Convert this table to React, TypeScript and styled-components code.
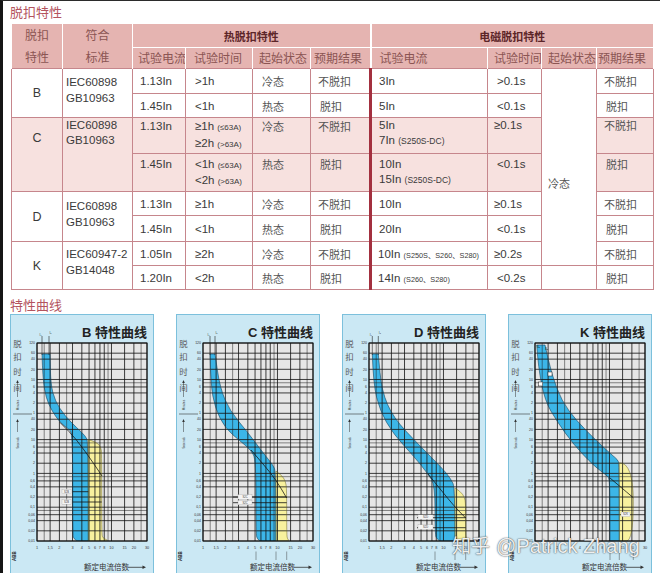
import React from 'react';
import styled, { createGlobalStyle } from 'styled-components';

const GlobalStyle = createGlobalStyle`
  html, body { margin: 0; padding: 0; background: #fff; overflow: hidden; }
  body { font-family: "Liberation Sans", "Noto Sans CJK SC", sans-serif; }
`;

const Frame = styled.div`
  position: relative;
  width: 660px;
  height: 573px;
  box-sizing: border-box;
  border-left: 3px solid #151515;
  border-top: 1px solid #2b2b2b;
  background: #fff;
  overflow: hidden;
`;

const SectionTitle = styled.div<{ $h: number; $pt?: number }>`
  height: ${p => p.$h}px;
  box-sizing: border-box;
  padding: ${p => p.$pt ?? 0}px 0 0 7px;
  line-height: ${p => p.$h - (p.$pt ?? 0)}px;
  font-family: "Noto Sans CJK SC", sans-serif;
  font-size: 13px;
  color: #b3535e;
`;

const Table = styled.table`
  margin-left: 8px;
  width: 642px;
  border-collapse: collapse;
  table-layout: fixed;
  border: 1.5px solid #b56a72;
`;

const Col = styled.col<{ $w: number }>`
  width: ${p => p.$w}px;
`;

const Tr = styled.tr<{ $h: number; $pink?: boolean }>`
  height: ${p => p.$h}px;
  background: ${p => (p.$pink ? '#f7e1df' : '#ffffff')};
`;

const Th = styled.th<{ $pl?: number; $center?: boolean; $sep?: boolean; $bold?: boolean; $lh?: number }>`
  background: #e5b4b1;
  border: 1px solid #ffffff;
  border-bottom: none;
  ${p => (p.$sep ? 'border-left: 2px solid #ffffff;' : '')}
  padding: 0 0 0 ${p => p.$pl ?? 0}px;
  text-align: ${p => (p.$center ? 'center' : 'left')};
  vertical-align: middle;
  font-family: "Noto Sans CJK SC", sans-serif;
  font-size: ${p => (p.$bold ? 11 : 12)}px;
  font-weight: ${p => (p.$bold ? 700 : 400)};
  color: ${p => (p.$bold ? '#5c2528' : '#8b5553')};
  line-height: ${p => p.$lh ?? 20}px;
  white-space: nowrap;
  overflow: hidden;
`;

const Td = styled.td<{
  $pl?: number;
  $pt?: number;
  $lh?: number;
  $top?: boolean;
  $center?: boolean;
  $sep?: boolean;
  $cjk?: boolean;
  $bg?: string;
}>`
  border: 1px solid #c6868c;
  ${p => (p.$sep ? 'border-left: 3px solid #a3303f;' : '')}
  padding: ${p => p.$pt ?? 0}px 0 0 ${p => p.$pl ?? 7}px;
  vertical-align: ${p => (p.$top ? 'top' : 'middle')};
  text-align: ${p => (p.$center ? 'center' : 'left')};
  font-family: ${p => (p.$cjk ? '"Noto Sans CJK SC", sans-serif' : '"Liberation Sans", "Noto Sans CJK SC", sans-serif')};
  font-size: ${p => (p.$cjk ? 11 : 11.5)}px;
  line-height: ${p => p.$lh ?? 16}px;
  color: ${p => (p.$cjk ? '#555555' : '#3a3a3a')};
  ${p => (p.$bg ? `background: ${p.$bg};` : '')}
  white-space: nowrap;
  overflow: hidden;
`;

const Line = styled.div``;

const Small = styled.span<{ $size?: number }>`
  font-size: ${p => p.$size ?? 8}px;
  line-height: 1;
`;

const Letter = styled.span`
  font-size: 12.5px;
`;

const ChartRow = styled.div`
  display: flex;
  gap: 22px;
  padding-left: 7px;
`;

const Panel = styled.div`
  width: 144px;
  height: 262px;
  flex-shrink: 0;
  box-sizing: border-box;
  border: 1px solid #7cc0dc;
  background: #cbe8f4;
  display: flex;
  flex-direction: column;
`;

const ChartTitle = styled.div`
  height: 28px;
  box-sizing: border-box;
  padding: 11px 6px 0 0;
  text-align: right;
  font-family: "Liberation Sans", "Noto Sans CJK SC", sans-serif;
  font-weight: 700;
  font-size: 13px;
  line-height: 14px;
  color: #222;
  white-space: nowrap;
`;

const ChartSvg = styled.svg`
  display: block;
  overflow: visible;
  font-family: "Liberation Sans", "Noto Sans CJK SC", sans-serif;
`;

const Watermark = styled.div`
  position: absolute;
  left: 449px;
  top: 533px;
  font-family: "Liberation Sans", "Noto Sans CJK SC", sans-serif;
  font-size: 20px;
  line-height: 22px;
  color: rgba(255, 255, 255, 0.93);
  text-shadow: 0 0 1px rgba(60, 60, 60, 0.9), 0 0 2px rgba(0, 0, 0, 0.45);
  white-space: nowrap;
  pointer-events: none;
`;

const Zh = styled.span`
  font-family: "Noto Sans CJK SC", sans-serif;
  font-size: 19px;
  margin-right: 6px;
`;

/* ---------- chart drawing ---------- */

type P = [number, number];

const GX0 = 27;
const GX1 = 137;
const GY0 = 29;
const GY1 = 227;
const GW = GX1 - GX0;
const GH = GY1 - GY0;
const X = (m: number) => GX0 + (Math.log10(m) / Math.log10(30)) * GW;
const Y = (t: number) =>
  GY0 + ((Math.log10(7200) - Math.log10(t)) / (Math.log10(7200) - Math.log10(0.01))) * GH;

const VMAIN = [1, 1.5, 2, 3, 4, 5, 6, 7, 8, 10, 15, 20, 30];
const VEXTRA = [1.25, 2.5, 9, 25];
const HMAIN = [7200, 3600, 2400, 1200, 600, 360, 240, 120, 60, 40, 20, 10, 6, 4, 2, 1, 0.6, 0.4, 0.2, 0.1, 0.06, 0.04, 0.02, 0.01];
const HEXTRA = [480, 8, 0.8, 0.08];

const YLABELS: [number, string][] = [
  [7200, '120'], [3600, '60'], [2400, '40'], [1200, '20'], [600, '10'], [360, '6'], [240, '4'],
  [120, '2'], [60, '1'], [40, '40'], [20, '20'], [10, '10'], [6, '6'], [4, '4'], [2, '2'], [1, '1'],
  [0.6, '0,6'], [0.4, '0,4'], [0.2, '0,2'], [0.1, '0,1'], [0.06, '0,06'], [0.04, '0,04'],
  [0.02, '0,02'], [0.01, '0,01'],
];
const XLABELS: [number, string][] = [
  [1, '1'], [1.5, '1,5'], [2, '2'], [3, '3'], [4, '4'], [5, '5'], [6, '6'], [7, '7'], [8, '8'],
  [10, '10'], [15, '15'], [20, '20'], [30, '30'],
];

const smooth = (pts: P[], cmd: 'M' | 'L' = 'M') => {
  let d = `${cmd}${pts[0][0]} ${pts[0][1]}`;
  for (let i = 1; i < pts.length - 1; i++) {
    const [x, y] = pts[i];
    const [nx, ny] = pts[i + 1];
    d += ` Q${x} ${y} ${(x + nx) / 2} ${(y + ny) / 2}`;
  }
  const l = pts[pts.length - 1];
  d += ` L${l[0]} ${l[1]}`;
  return d;
};
const band = (left: P[], right: P[]) => `${smooth(left)} ${smooth([...right].reverse(), 'L')} Z`;

interface ChartSpec {
  letter: string;
  left: P[];
  right: P[];
  yellow: P[];
  diag: P[];
  ticks: { y: number; x1: number; x2: number }[];
  tags: { x: number; y: number; w: number }[];
  iLines?: [number, number];
  marks: number[];
  squares?: P[];
}

const CHARTS: ChartSpec[] = [
  {
    letter: 'B',
    left: [[32, 40], [32.7, 64], [36, 84], [42, 97], [50, 108.5], [58, 114.5], [62.7, 119], [62.7, 221], [64, 225], [67.5, 227]],
    right: [[40, 40], [40.7, 70], [45, 87], [55, 102], [67, 114], [75.5, 122], [78.3, 128], [78.3, 227]],
    yellow: [[78.3, 125.5], [86.5, 128], [91, 133], [91.7, 140], [91.7, 220], [93, 224.5], [100, 227], [78.3, 227]],
    diag: [[50, 108.5], [60, 118], [72, 133], [84, 150], [92, 162]],
    ticks: [{ y: 177.7, x1: 62.7, x2: 78.3 }, { y: 188, x1: 62.7, x2: 91.7 }],
    tags: [{ x: 52, y: 175.2, w: 9 }, { x: 52, y: 185.5, w: 9 }],
    iLines: [32, 39],
    marks: [],
  },
  {
    letter: 'C',
    left: [[34, 40], [34.7, 70], [39, 94], [49, 114], [64, 127], [75, 136], [80, 146], [80, 221], [81.5, 225], [84, 227]],
    right: [[39, 40], [44, 74], [54, 97], [70.7, 117], [88, 140], [97, 151], [100, 158], [100, 227]],
    yellow: [[100, 157], [105.5, 161], [109.5, 167], [110.7, 175], [110.7, 221], [111.5, 225], [113.5, 227], [100, 227]],
    diag: [[75, 136], [88, 151], [100, 166], [110.7, 184]],
    ticks: [{ y: 183, x1: 57, x2: 110.7 }, { y: 188.7, x1: 57, x2: 110.7 }],
    tags: [{ x: 62, y: 180.6, w: 14 }, { x: 62, y: 186.3, w: 14 }],
    iLines: [34, 39],
    marks: [80, 100, 110.7],
  },
  {
    letter: 'D',
    left: [[30.3, 40], [31.3, 70], [38, 97], [51.3, 120], [73, 143.7], [86, 160], [93, 171], [93, 221], [95, 225], [98, 227]],
    right: [[36.3, 40], [39.7, 77], [51.3, 103.7], [76.3, 130.3], [100, 154], [109, 165], [113, 174], [113, 227]],
    yellow: [[113, 174], [118.5, 177.5], [122.5, 183], [123.7, 190], [123.7, 221], [124.5, 225], [126, 227], [113, 227]],
    diag: [[86, 160], [99, 176], [112, 192], [123.7, 204]],
    ticks: [{ y: 203.7, x1: 75, x2: 123.7 }, { y: 213.7, x1: 75, x2: 123.7 }],
    tags: [{ x: 76, y: 200.8, w: 15 }, { x: 76, y: 210.8, w: 15 }],
    iLines: [30.3, 36.3],
    marks: [93, 113, 123.7],
  },
  {
    letter: 'K',
    left: [[28.7, 31], [30.3, 54], [37, 87], [48.7, 107], [65.3, 130.3], [86, 152], [99, 161.5], [102, 166], [102, 227]],
    right: [[37, 31], [43.7, 60.3], [53.7, 87], [68.7, 107], [88.7, 127], [104, 141], [109.5, 145.5], [111.3, 150], [111.3, 227]],
    yellow: [[111.3, 148.7], [125.3, 148.7], [125.3, 227], [111.3, 227]],
    diag: [[102, 164], [112, 172.5], [125.3, 183.7]],
    ticks: [],
    tags: [{ x: 113, y: 198, w: 9 }],
    marks: [102, 111.3, 125.3],
    squares: [[42, 60], [32.7, 70]],
  },
];

const ArrowUp: React.FC<{ x: number; top: number; bottom: number }> = ({ x, top, bottom }) => (
  <g>
    <line x1={x} x2={x} y1={bottom} y2={top + 2.5} stroke="#333" strokeWidth={0.5} />
    <polygon points={`${x - 1.3},${top + 3} ${x + 1.3},${top + 3} ${x},${top}`} fill="#333" />
  </g>
);

const Chart: React.FC<{ spec: ChartSpec }> = ({ spec }) => {
  const cid = `grid-clip-${spec.letter}`;
  const bandD = band(spec.left, spec.right);
  const yellowD = `${smooth(spec.yellow)} Z`;
  return (
    <Panel>
      <ChartTitle>{spec.letter} 特性曲线</ChartTitle>
      <ChartSvg width={142} height={232} viewBox="1 29 142 232">
        <defs>
          <clipPath id={cid}>
            <rect x={GX0} y={GY0} width={GW} height={GH} />
          </clipPath>
        </defs>

        {['脱', '扣', '时', '间'].map((c, i) => (
          <text key={c} x={7.5} y={[32.5, 46, 61, 77][i]} fontSize={8.5} fill="#5b5b5b" textAnchor="middle">
            {c}
          </text>
        ))}
        <ArrowUp x={7.5} top={66} bottom={83} />
        <text x={0} y={0} fontSize={3} fill="#444" textAnchor="middle" transform="translate(8.6 91) rotate(-90)">
          Minutes
        </text>
        <line x1={3} x2={22} y1={100} y2={100} stroke="#333" strokeWidth={0.6} />
        <ArrowUp x={7.5} top={105} bottom={118} />
        <text x={0} y={0} fontSize={3} fill="#444" textAnchor="middle" transform="translate(8.6 129) rotate(-90)">
          Seconds
        </text>
        <text x={0} y={0} fontSize={4.5} fontWeight={700} fill="#1f1f1f" textAnchor="middle" transform="translate(6 242) rotate(-90)">
          ABB
        </text>

        <rect x={GX0} y={GY0} width={GW} height={GH} fill="#e6e6e6" />
        <g clipPath={`url(#${cid})`}>
          <path d={yellowD} fill="#f8f19e" />
          <path d={bandD} fill="#3cb6e8" />
        </g>

        {HEXTRA.map(t => (
          <line key={`he${t}`} x1={GX0} x2={GX1} y1={Y(t)} y2={Y(t)} stroke="#1a1a1a" strokeWidth={0.5} />
        ))}
        {HMAIN.map(t => (
          <line key={`h${t}`} x1={GX0} x2={GX1} y1={Y(t)} y2={Y(t)} stroke="#111" strokeWidth={0.8} />
        ))}
        {VEXTRA.map(m => (
          <line key={`ve${m}`} x1={X(m)} x2={X(m)} y1={GY0} y2={GY1} stroke="#1a1a1a" strokeWidth={0.5} />
        ))}
        {VMAIN.map(m => (
          <line key={`v${m}`} x1={X(m)} x2={X(m)} y1={GY0} y2={GY1} stroke="#111" strokeWidth={0.8} />
        ))}

        <g clipPath={`url(#${cid})`}>
          <path d={bandD} fill="none" stroke="#14455f" strokeWidth={0.6} />
          <path d={yellowD} fill="none" stroke="#6b6520" strokeWidth={0.5} />
          <path d={smooth(spec.diag)} fill="none" stroke="#111" strokeWidth={0.75} />
          {spec.ticks.map((t, i) => (
            <line key={`t${i}`} x1={t.x1} x2={t.x2} y1={t.y} y2={t.y} stroke="#111" strokeWidth={0.8} />
          ))}
          {spec.tags.map((t, i) => (
            <g key={`g${i}`}>
              <rect x={t.x} y={t.y} width={t.w} height={4.6} fill="#f3f3f3" stroke="#777" strokeWidth={0.2} />
              <text x={t.x + t.w / 2} y={t.y + 3.4} fontSize={2.6} fill="#333" textAnchor="middle">
                S2{spec.letter}
              </text>
            </g>
          ))}
          {(spec.squares ?? []).map(([sx, sy], i) => (
            <rect key={`s${i}`} x={sx - 2} y={sy - 2} width={4} height={4} fill="#fff" stroke="#222" strokeWidth={0.5} />
          ))}
        </g>
        <rect x={GX0} y={GY0} width={GW} height={GH} fill="none" stroke="#111" strokeWidth={1} />

        {spec.iLines &&
          spec.iLines.map((x, i) => (
            <g key={`i${i}`}>
              <line x1={x} x2={x} y1={22} y2={41} stroke="#222" strokeWidth={0.6} />
              <text x={x + (i === 0 ? -1.5 : 1.5)} y={i === 0 ? 21.5 : 20} fontSize={3} fill="#333" textAnchor="middle">
                {i === 0 ? 'I₁' : 'I₂'}
              </text>
            </g>
          ))}
        {!spec.iLines && (
          <g>
            <text x={29.5} y={34} fontSize={3.5} fontWeight={700} fill="#111">I₁</text>
            <text x={37.5} y={36} fontSize={3.5} fontWeight={700} fill="#111">I₂</text>
          </g>
        )}

        {YLABELS.map(([t, s]) => (
          <text key={`yl${t}`} x={GX0 - 2} y={Y(t) + 1.2} fontSize={3.5} fill="#333" textAnchor="end">
            {s}
          </text>
        ))}
        {XLABELS.map(([m, s]) => (
          <text key={`xl${m}`} x={X(m)} y={235} fontSize={3.8} fill="#333" textAnchor="middle">
            {s}
          </text>
        ))}
        {spec.marks.map(x => (
          <line key={`m${x}`} x1={x} x2={x} y1={237.5} y2={246} stroke="#333" strokeWidth={0.45} />
        ))}

        <text x={74} y={256} fontSize={7.5} fill="#333">
          额定电流倍数
        </text>
        <line x1={118} x2={133} y1={253.3} y2={253.3} stroke="#333" strokeWidth={0.8} />
        <polygon points="132.5,251.5 136,253.3 132.5,255.1" fill="#333" />
      </ChartSvg>
    </Panel>
  );
};

/* ---------- page ---------- */

const COLS = [51, 70, 53, 67, 58, 60, 117, 54, 55, 57];

export default function App() {
  return (
    <>
      <GlobalStyle />
      <Frame>
        <SectionTitle $h={22}>脱扣特性</SectionTitle>
        <Table>
          <colgroup>
            {COLS.map((w, i) => (
              <Col key={i} $w={w} />
            ))}
          </colgroup>
          <thead>
            <Tr $h={24}>
              <Th rowSpan={2} $center $lh={22}>
                脱扣
                <br />
                特性
              </Th>
              <Th rowSpan={2} $center $lh={22}>
                符合
                <br />
                标准
              </Th>
              <Th colSpan={4} $center $bold>
                热脱扣特性
              </Th>
              <Th colSpan={4} $center $bold $sep>
                电磁脱扣特性
              </Th>
            </Tr>
            <Tr $h={21}>
              <Th $pl={5}>试验电流</Th>
              <Th $pl={8}>试验时间</Th>
              <Th $pl={6}>起始状态</Th>
              <Th $pl={3}>预期结果</Th>
              <Th $pl={8} $sep>
                试验电流
              </Th>
              <Th $pl={6}>试验时间</Th>
              <Th $pl={6}>起始状态</Th>
              <Th $pl={1}>预期结果</Th>
            </Tr>
          </thead>
          <tbody>
            {/* B */}
            <Tr $h={25}>
              <Td rowSpan={2} $center $pl={0}>
                <Letter>B</Letter>
              </Td>
              <Td rowSpan={2} $top $pt={5} $pl={3}>
                <Line>IEC60898</Line>
                <Line>GB10963</Line>
              </Td>
              <Td>1.13In</Td>
              <Td $pl={9}>&gt;1h</Td>
              <Td $pl={9} $cjk>冷态</Td>
              <Td $cjk>不脱扣</Td>
              <Td $sep>3In</Td>
              <Td $pl={9}>&gt;0.1s</Td>
              <Td rowSpan={7} $top $pt={106} $pl={6} $cjk $bg="#ffffff">
                冷态
              </Td>
              <Td $cjk>不脱扣</Td>
            </Tr>
            <Tr $h={24}>
              <Td>1.45In</Td>
              <Td $pl={9}>&lt;1h</Td>
              <Td $pl={9} $cjk>热态</Td>
              <Td $pl={9} $cjk>脱扣</Td>
              <Td $sep>5In</Td>
              <Td $pl={9}>&lt;0.1s</Td>
              <Td $pl={9} $cjk>脱扣</Td>
            </Tr>

            {/* C */}
            <Tr $h={36} $pink>
              <Td rowSpan={2} $center $pl={0} $top $pt={11} $lh={18}>
                <Letter>C</Letter>
              </Td>
              <Td rowSpan={2} $top $pl={3} $lh={15}>
                <Line>IEC60898</Line>
                <Line>GB10963</Line>
              </Td>
              <Td $top $lh={17}>1.13In</Td>
              <Td $top $lh={17} $pl={9}>
                <Line>
                  ≥1h <Small>(≤63A)</Small>
                </Line>
                <Line>
                  ≥2h <Small>(&gt;63A)</Small>
                </Line>
              </Td>
              <Td $top $lh={17} $pl={9} $cjk>
                冷态
              </Td>
              <Td $top $lh={17} $cjk>
                不脱扣
              </Td>
              <Td $top $lh={15} $sep>
                <Line>5In</Line>
                <Line>
                  7In <Small $size={8.5}>(S250S-DC)</Small>
                </Line>
              </Td>
              <Td $top $lh={15} $pl={6}>
                ≥0.1s
              </Td>
              <Td $top $lh={15} $cjk>
                不脱扣
              </Td>
            </Tr>
            <Tr $h={38} $pink>
              <Td $top $pt={2}>1.45In</Td>
              <Td $top $pt={2} $pl={9}>
                <Line>
                  &lt;1h <Small>(≤63A)</Small>
                </Line>
                <Line>
                  &lt;2h <Small>(&gt;63A)</Small>
                </Line>
              </Td>
              <Td $top $pt={2} $pl={9} $cjk>
                热态
              </Td>
              <Td $top $pt={2} $pl={9} $cjk>
                脱扣
              </Td>
              <Td $top $pt={3} $lh={15} $sep>
                <Line>10In</Line>
                <Line>
                  15In <Small $size={8.5}>(S250S-DC)</Small>
                </Line>
              </Td>
              <Td $top $pt={3} $lh={15} $pl={9}>
                &lt;0.1s
              </Td>
              <Td $top $pt={3} $lh={15} $pl={9} $cjk>
                脱扣
              </Td>
            </Tr>

            {/* D */}
            <Tr $h={24}>
              <Td rowSpan={2} $center $pl={0}>
                <Letter>D</Letter>
              </Td>
              <Td rowSpan={2} $top $pt={6} $pl={3}>
                <Line>IEC60898</Line>
                <Line>GB10963</Line>
              </Td>
              <Td>1.13In</Td>
              <Td $pl={9}>≥1h</Td>
              <Td $pl={9} $cjk>冷态</Td>
              <Td $cjk>不脱扣</Td>
              <Td $sep>10In</Td>
              <Td $pl={6}>≥0.1s</Td>
              <Td $cjk>不脱扣</Td>
            </Tr>
            <Tr $h={26}>
              <Td>1.45In</Td>
              <Td $pl={9}>&lt;1h</Td>
              <Td $pl={9} $cjk>热态</Td>
              <Td $pl={9} $cjk>脱扣</Td>
              <Td $sep>20In</Td>
              <Td $pl={9}>&lt;0.1s</Td>
              <Td $pl={9} $cjk>脱扣</Td>
            </Tr>

            {/* K */}
            <Tr $h={24}>
              <Td rowSpan={2} $center $pl={0}>
                <Letter>K</Letter>
              </Td>
              <Td rowSpan={2} $top $pt={4} $pl={3}>
                <Line>IEC60947-2</Line>
                <Line>GB14048</Line>
              </Td>
              <Td>1.05In</Td>
              <Td $pl={9}>≥2h</Td>
              <Td $pl={9} $cjk>冷态</Td>
              <Td $cjk>不脱扣</Td>
              <Td $sep $pl={6}>
                10In <Small $size={7.3}>(S250S、S260、S280)</Small>
              </Td>
              <Td $pl={6}>≥0.2s</Td>
              <Td $cjk>不脱扣</Td>
            </Tr>
            <Tr $h={24}>
              <Td>1.20In</Td>
              <Td $pl={9}>&lt;2h</Td>
              <Td $pl={9} $cjk>热态</Td>
              <Td $pl={9} $cjk>脱扣</Td>
              <Td $sep $pl={6}>
                14In <Small $size={7.3}>(S260、S280)</Small>
              </Td>
              <Td $pl={9}>&lt;0.2s</Td>
              <Td />
              <Td $pl={9} $cjk>脱扣</Td>
            </Tr>
          </tbody>
        </Table>

        <SectionTitle $h={24} $pt={6}>
          特性曲线
        </SectionTitle>
        <ChartRow>
          {CHARTS.map(spec => (
            <Chart key={spec.letter} spec={spec} />
          ))}
        </ChartRow>

        <Watermark>
          <Zh>知乎</Zh>@Patrick Zhang
        </Watermark>
      </Frame>
    </>
  );
}
